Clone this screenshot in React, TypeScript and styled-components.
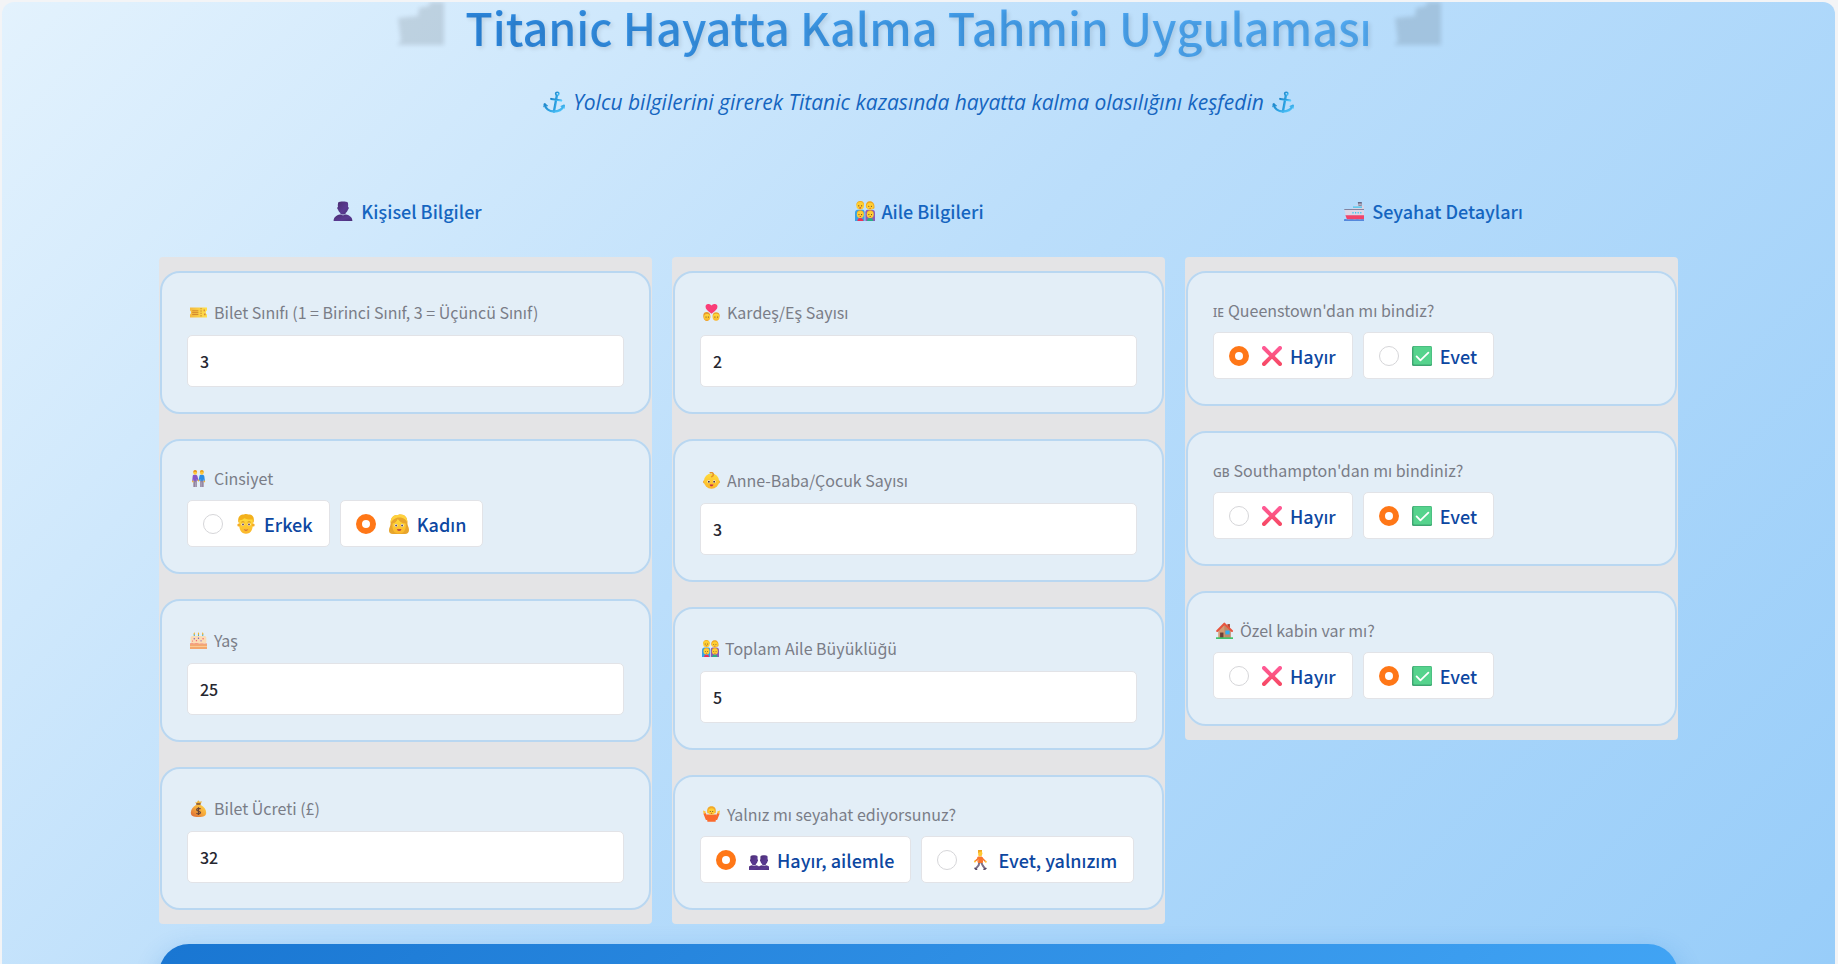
import React, { useState } from "react";
import styled, { createGlobalStyle } from "styled-components";

const sans = `"Noto Sans CJK SC", "Noto Sans", sans-serif`;

const GlobalStyle = createGlobalStyle`
  *, *::before, *::after { box-sizing: border-box; }
  body { margin: 0; background: #f3f4f6; font-family: ${sans}; }
`;

const Frame = styled.div`
  height: 100vh;
  padding: 2px 3px 0 2px;
  overflow: hidden;
`;

const Page = styled.main`
  height: 100%;
  overflow: hidden;
  padding: 0 16px;
  border-radius: 12px 12px 0 0;
  background: linear-gradient(135deg, #e3f2fd 0%, #bbdefb 45%, #98cdf9 100%);
`;

const Content = styled.div`
  max-width: 1519px;
  margin: 0 auto;
`;

const Header = styled.header`
  display: flex;
  flex-direction: column;
  align-items: center;
  gap: 20px;
  margin-bottom: 77px;
`;

const TitleRow = styled.div`
  display: flex;
  align-items: flex-start;
  justify-content: center;
  gap: 16px;
  width: 100%;
`;

const Title = styled.h1`
  margin: 0;
  padding-bottom: 14px;
  font-size: 45px;
  font-weight: 500;
  line-height: 50px;
  color: transparent;
  background: linear-gradient(45deg, #2984dc, #3f9bea 45%, #55adf5);
  background-clip: text;
  -webkit-background-clip: text;
  text-shadow: 2px 2px 4px rgba(0, 0, 0, 0.1);
`;

const ShipShadow = styled.svg`
  width: 58px;
  height: 50px;
  flex: none;
  filter: blur(2px);
`;

const Subtitle = styled.p`
  display: flex;
  align-items: center;
  gap: 8px;
  margin: 0;
  font-family: "Open Sans", "Noto Sans", sans-serif;
  font-size: 21px;
  font-style: italic;
  line-height: 32px;
  color: #1565c0;
`;

const Columns = styled.div`
  display: grid;
  grid-template-columns: repeat(3, minmax(0, 1fr));
  gap: 20px;
  align-items: start;
  margin-bottom: 20px;
`;

const ColumnTitle = styled.h2`
  display: flex;
  align-items: center;
  justify-content: center;
  gap: 4px;
  margin: 0 0 30px;
  font-size: 18px;
  font-weight: 500;
  line-height: 32px;
  color: #1565c0;
`;

const Panel = styled.div`
  display: flex;
  flex-direction: column;
  gap: 25px;
  padding: 14px 1px;
  border-radius: 4px;
  background: #e4e4e6;
`;

const Card = styled.div`
  padding: 25px;
  border: 2px solid #b9d7f1;
  border-radius: 20px;
  background: #e3eef7;
`;

const RadioCard = styled(Card).attrs({ as: "fieldset" })`
  min-width: 0;
  margin: 0;
`;

const FieldLabel = styled.label`
  display: flex;
  align-items: center;
  gap: 4px;
  margin-bottom: 9px;
  font-size: 16px;
  line-height: 28px;
  color: #7a7d87;
`;

const Legend = styled.legend<{ $baseline: boolean }>`
  display: flex;
  align-items: ${(p) => (p.$baseline ? "baseline" : "center")};
  gap: 4px;
  float: left;
  width: 100%;
  margin-bottom: 10px;
  padding: 0;
  font-size: 16px;
  line-height: 24px;
  color: #7a7d87;
`;

const CountryCode = styled.span`
  font-family: "Noto Sans", sans-serif;
  font-size: 12px;
  font-weight: 500;
  line-height: 16px;
`;

const NumberInput = styled.input`
  display: block;
  width: 100%;
  height: 52px;
  padding: 0 12px;
  border: 1px solid #e2e3e7;
  border-radius: 5px;
  background: #fff;
  font-family: ${sans};
  font-size: 16px;
  font-weight: 500;
  color: #262730;
`;

const Options = styled.div`
  display: flex;
  gap: 10px;
  clear: both;
`;

const Option = styled.label`
  display: flex;
  align-items: center;
  height: 47px;
  padding: 0 16px 0 15px;
  border: 1px solid #e2e3e7;
  border-radius: 5px;
  background: #fff;
  font-size: 18px;
  font-weight: 500;
  line-height: 24px;
  color: #0d47a1;
  white-space: nowrap;
`;

const OptionText = styled.span`
  margin-left: 4px;
`;

const Radio = styled.input`
  appearance: none;
  width: 20px;
  height: 20px;
  margin: 0 9px 0 0;
  border: 1px solid #d6d6d9;
  border-radius: 50%;
  background: #fff;

  &:checked {
    border: 6px solid #ff7717;
  }
`;

const Submit = styled.button`
  display: block;
  width: 100%;
  height: 64px;
  border: 0;
  border-radius: 30px;
  background: linear-gradient(135deg, #1976d2, #42a5f5);
  box-shadow: 0 8px 25px rgba(25, 118, 210, 0.3);
`;

const EmojiBox = styled.span<{ $w: number }>`
  display: inline-flex;
  justify-content: center;
  align-self: center;
  flex: none;
  width: ${(p) => p.$w}px;
`;

const HiddenDefs = styled.svg`
  position: absolute;
  width: 0;
  height: 0;
`;

const Gradients = () => (
  <HiddenDefs aria-hidden="true">
    <defs>
      <linearGradient id="anchorFill" x1="0" y1="0" x2="1" y2="1">
        <stop offset="0" stopColor="#1f86c9" />
        <stop offset="0.5" stopColor="#2b9fe0" />
        <stop offset="1" stopColor="#55cbff" />
      </linearGradient>
      <linearGradient id="purple" x1="0" y1="0" x2="1" y2="1">
        <stop offset="0" stopColor="#4b2e72" />
        <stop offset="0.6" stopColor="#5a3a92" />
        <stop offset="1" stopColor="#4a2f78" />
      </linearGradient>
      <linearGradient id="skin" x1="0" y1="0" x2="0" y2="1">
        <stop offset="0" stopColor="#ffdc3c" />
        <stop offset="1" stopColor="#fbb52a" />
      </linearGradient>
      <linearGradient id="ticket" x1="0" y1="0" x2="1" y2="0">
        <stop offset="0" stopColor="#f4b93f" />
        <stop offset="1" stopColor="#ffe04a" />
      </linearGradient>
      <linearGradient id="bag" x1="1" y1="0" x2="0" y2="1">
        <stop offset="0" stopColor="#ffd84a" />
        <stop offset="0.5" stopColor="#f5a53a" />
        <stop offset="1" stopColor="#d9653a" />
      </linearGradient>
      <linearGradient id="cross" x1="0" y1="0" x2="0" y2="1">
        <stop offset="0" stopColor="#ff5a94" />
        <stop offset="1" stopColor="#f74a66" />
      </linearGradient>
    </defs>
  </HiddenDefs>
);

const face = (x: number, y: number, r: number) => (
  <>
    <circle cx={x} cy={y} r={r} fill="#ffce32" />
    <circle cx={x - r * 0.38} cy={y} r={r * 0.16} fill="#5c3a2c" />
    <circle cx={x + r * 0.38} cy={y} r={r * 0.16} fill="#5c3a2c" />
    <ellipse cx={x} cy={y + r * 0.55} rx={r * 0.28} ry={r * 0.14} fill="#c2363a" />
  </>
);

const bust = (
  <>
    <path d="M5.2 1.4C6.4.1 13.6.1 14.8 1.4c.5 1.700.4 3.300.2 4.400.9.1 1.100 2.300 0 2.800-.5 1.800-1.600 2.900-2.400 3.400v1.600H7.400V12c-.8-.5-1.900-1.600-2.400-3.400-1.100-.5-.9-2.700 0-2.800-.2-1.100-.3-2.700.2-4.400z" />
    <path d="M.6 20c0-3.600 2.600-5.600 6.400-6.400 1.600 1 4.400 1 6 0 3.800.8 6.400 2.800 6.400 6.400z" />
  </>
);

const drawings: Record<string, React.ReactNode> = {
  anchor: (
    <g fill="none" stroke="url(#anchorFill)" strokeLinecap="round" strokeLinejoin="round">
      <circle cx="13" cy="2.6" r="1.5" strokeWidth="1.5" />
      <path d="M12.6 4.4L10 18.6" strokeWidth="2.2" />
      <path d="M7.4 7.2l9.2 1.5" strokeWidth="1.9" />
      <path d="M1.6 12.2C2.2 15.8 5.4 18.6 10 18.6c4 0 7.2-1.6 8.8-5" strokeWidth="2.2" />
      <path d="M.8 14.2l.8-2.3 2.3 1.5M16.6 14l2.5-1 .2 2.6" strokeWidth="1.2" />
    </g>
  ),
  person: <g fill="url(#purple)">{bust}</g>,
  people: (
    <g fill="url(#purple)">
      <g transform="translate(-2 5) scale(0.7 0.75)">{bust}</g>
      <g transform="translate(8 5) scale(0.7 0.75)">{bust}</g>
    </g>
  ),
  family: (
    <>
      <path d="M0 20V12c0-2 1.200-3.200 3-3.200h4.600c1.400 0 2 1 2 2.400V20z" fill="#39a3e6" />
      <path d="M10.400 20v-8.800c0-1.400.8-2.400 2.200-2.400H17c1.800 0 3 1.200 3 3.200v8z" fill="#8d5bb5" />
      <path d="M2.400 20c0-2 1.200-3 2.800-3S8.400 18 8.400 20z" fill="#ef2f57" />
      <path d="M12 20c0-2 1.200-3 3-3s3.200 1 3.200 3z" fill="#2cae86" />
      <path d="M11 6c-.6-4 1.400-5.800 4-5.800S20 2.400 19.400 7c-.2 1.400-8.200 1.400-8.400-1z" fill="#efa51e" />
      <path d="M1.400 4.600C1 1.600 2.800 0 5.200 0s4.200 1.400 3.800 4.600z" fill="#f0ac1f" />
      {face(5.2, 4.8, 3.8)}
      {face(15.1, 5.2, 3.5)}
      <path d="M1.900 12.600c-.2-2.200 1.400-3.400 3.400-3.400s3.600 1.200 3.300 3.400z" fill="#f0a01e" />
      <path d="M11.800 12.600c-.2-2.200 1.400-3.400 3.400-3.400s3.600 1.200 3.300 3.400z" fill="#f0a01e" />
      {face(5.3, 13.6, 3.5)}
      {face(15.2, 13.6, 3.5)}
    </>
  ),
  ship: (
    <>
      <path d="M13.800 1.200h4V5.600h-3.200z" fill="#46405c" />
      <path d="M14.200 2.600h3.600v1.200h-3.600z" fill="#d9d4e4" />
      <path d="M10.400 4.400H20v5H7.600l1.200-2.600z" fill="#d9d3e4" />
      <path d="M9 5.600h9v1.100H9z" fill="#37c7f2" />
      <path d="M.4 8.600H20V14.600H1.800z" fill="#dcd6e6" />
      <path d="M.2 8.200H20v.8H.4z" fill="#6d6785" />
      <path d="M8.400 11h1.200v1.400H8.400zM11 11h1.200v1.400H11zM13.600 11h1.200v1.400h-1.200zM16.200 11h1.200v1.400h-1.200z" fill="#37c7f2" />
      <path d="M1.400 14.200H20V18.600H3z" fill="#f1436a" />
      <path d="M0 18.400c2-.8 3 .2 5 0s3-.4 5 0 3-.4 5 0 3-.2 5 0V20H0z" fill="#5488dc" />
    </>
  ),
  ticket: (
    <>
      <path d="M0 4.200h20v3.400c-1.800.4-1.800 4.200 0 4.600V16H0v-3.800c1.600-.4 1.600-4.200 0-4.600z" fill="url(#ticket)" />
      <path d="M2.600 8h7.200M2.600 10.200h7.200M2.600 12.400h7.200" stroke="#cf8430" strokeWidth="1.1" />
      <path d="M13 4.600v11" stroke="#c88b31" strokeWidth="1.2" strokeDasharray="1.6 1.2" />
      <path d="M16 6.600h1.600v2H16zM16.400 11.200h2v2h-2z" fill="#d9883a" />
    </>
  ),
  couple: (
    <g transform="translate(1.8 0) scale(0.82 1)">
      <path d="M1.600 7.600c.2-1.600 1-2 3.400-2s3.200.6 3.600 2l1.400 4.800-1.400.6-1-2.400V13H3V10.600l-.6 2.600-1.400-.4z" fill="#8557c8" />
      <path d="M11.200 7.600c.4-1.600 1-2 3.600-2s3.400.6 3.600 2l.8 5.200-1.400.4-.8-2.600V13h-4.600v-2.400l-1 2.600-1.400-.8z" fill="#2e8de4" />
      <path d="M2.600 12.600h5V20H5.500v-5.600h-.4V20H2.600zM12.400 12.600h5V20h-2.300v-5.600h-.4V20h-2.300z" fill="#92839f" />
      <circle cx="5.200" cy="3" r="2.700" fill="#ffc83a" />
      <path d="M2.700 3C2.400 1 3.800.1 5.200.1S8 1 7.700 3C6 1.800 4.400 1.800 2.700 3z" fill="#e7901f" />
      <circle cx="14.800" cy="3" r="2.700" fill="#ffc83a" />
      <path d="M12.300 3c-.3-2 1.100-2.900 2.500-2.900S17.600 1 17.300 3c-1.500-1.200-3.300-1.200-5 0z" fill="#e7a01f" />
      <path d="M8.600 11.600h2.800l-1.400 2.400z" fill="#f9b52c" />
      <circle cx="1.700" cy="13.400" r="1" fill="#f9b52c" />
      <circle cx="18.500" cy="13.400" r="1" fill="#f9b52c" />
    </g>
  ),
  cake: (
    <>
      <path d="M5 2.400v4M10 2.400v4M15 2.400v4" stroke="#3fb1c4" strokeWidth="1.2" />
      <path d="M5 0l.9 2.400-.9 1-.9-1zM10 0l.9 2.400-.9 1-.9-1zM15 0l.9 2.400-.9 1-.9-1z" fill="#f7b227" />
      <rect x=".8" y="4.800" width="18.400" height="9" rx="2" fill="#fbdcb4" />
      <path d="M0 13.600c2-.6 3 .2 5 0s3-.4 5 0 3-.4 5 0 3-.6 5 0v1.400H0z" fill="#f6866a" />
      <path d="M0 14.600h20V20H0z" fill="#f3a76c" />
      <path d="M0 16.400h20v1.200H0z" fill="#fbcb96" />
      <g fill="#7a55c4">
        <circle cx="5" cy="8" r=".8" /><circle cx="10" cy="7.400" r=".8" /><circle cx="13" cy="10.400" r=".8" />
      </g>
      <g fill="#ee5a72">
        <circle cx="7.600" cy="10.200" r=".8" /><circle cx="15.400" cy="8" r=".8" /><circle cx="3" cy="10.600" r=".7" />
      </g>
    </>
  ),
  money: (
    <>
      <path d="M6 2.200l2 .6L9.600.4l1.800 1.800L14 1.400l-1.400 3.200H7.600z" fill="#f0b43c" />
      <path d="M7.400 3.800h5v2.200h-5z" fill="#7e4f3a" />
      <path d="M7.400 5.600h5C16.600 8 19 11 19 14.600c0 4-2.600 5.400-9 5.400s-9-1.400-9-5.400C1 11 3.400 8 7.400 5.600z" fill="url(#bag)" />
      <path d="M12.400 10.600c-1.200-1.400-4.600-1-4.600.9 0 2.200 4.600 1.200 4.600 3.300 0 1.900-3.600 2.100-4.800.6M10 8.600v9" fill="none" stroke="#6b4437" strokeWidth="1.4" />
    </>
  ),
  heartPair: (
    <>
      <path d="M10 11.400C5.400 8.200 3 6 3 3.200 3-.6 8-1 10 1.800 12-1 17-.6 17 3.200c0 2.800-2.400 5-7 8.200z" fill="#fa3d78" />
      <path d="M.4 15c-.6-4 1.600-5.600 4-5.600s4.600 1.600 4.200 5.600c-.2 6.600-8 6.400-8.200 0z" fill="#e9992b" />
      <circle cx="4.800" cy="15.600" r="3.700" fill="url(#skin)" />
      <path d="M11.400 15c-.6-4 1.600-5.400 4-5.400s4.800 1.400 4.200 5.400z" fill="#e9a32b" />
      <circle cx="15.400" cy="15.600" r="4" fill="url(#skin)" />
      <path d="M3 15.400h1.200M5.800 15.400H7M13.400 15.400h1.200M16.600 15.400h1.200" stroke="#75452e" strokeWidth="1.1" />
    </>
  ),
  baby: (
    <>
      <circle cx="1.800" cy="11.600" r="1.800" fill="#f2a130" />
      <circle cx="18.200" cy="11.600" r="1.800" fill="#f2a130" />
      <circle cx="10" cy="10.800" r="9" fill="url(#skin)" />
      <path d="M8.600.8c4-.8 4.800 3.400 1.600 4.800" fill="none" stroke="#e7932a" strokeWidth="1.800" strokeLinecap="round" />
      <circle cx="6.800" cy="11.400" r="1.600" fill="#fff" />
      <circle cx="13.200" cy="11.400" r="1.600" fill="#fff" />
      <circle cx="6.900" cy="11.500" r="1.100" fill="#4d2e2a" />
      <circle cx="13.100" cy="11.500" r="1.100" fill="#4d2e2a" />
      <path d="M7.800 14.800h4.400c-.2 2.800-4.200 2.800-4.400 0z" fill="#c32f4c" />
    </>
  ),
  shrug: (
    <>
      <path d="M4 10L10 10 16 10 14.800 18.600H5.200z" fill="#fb6a2c" />
      <path d="M1.800 8.400L4.400 15 7 12M18.200 8.400L15.600 15 13 12" fill="none" stroke="#fb6a2c" strokeWidth="3" strokeLinejoin="round" />
      <path d="M5.200 8.600c-1-5.600.8-8.200 4.800-8.200s5.800 2.600 4.800 8.200z" fill="#f2a92a" />
      {face(10, 6.4, 3.8)}
      <path d="M0 5.400l3.200 1-.4 2.600L.6 8.600zM20 5.400l-3.200 1 .4 2.600 2.200-.4z" fill="#ffc43a" />
    </>
  ),
  house: (
    <>
      <path d="M13.400 2.400h3v5h-3z" fill="#a84a36" />
      <path d="M3 9l6.600-6.600L17.400 9v10H3z" fill="#c18a68" />
      <path d="M3 9l6.600-6.600L10 12v7H3z" fill="#d49d75" />
      <path d="M4.800 12.400h4V19h-4z" fill="#6b4038" />
      <path d="M11 10h5v4.600h-5z" fill="#37aef0" />
      <path d="M1.400 10.600L9.800 2l9 8.600" fill="none" stroke="#e8553f" strokeWidth="2.400" strokeLinecap="round" strokeLinejoin="round" />
      <path d="M0 18h20v2H0z" fill="#41c36b" />
    </>
  ),
  man: (
    <>
      <path d="M2.400 8.600C1.400 3 3.800.4 8 .4c1.600-.6 3.400-.4 4.600.2 4.400 0 6 3 5 8z" fill="#f3b11c" />
      <path d="M3.400 6.200c3-.4 4-1.200 5-2 2.400 1.400 5.400 1.400 8.200 1.400.6 4.200.4 8-1.200 11.200-1.800 4-9 4-10.800 0-1.600-3.200-1.800-6.600-1.200-10.600z" fill="url(#skin)" />
      <circle cx="2.800" cy="11" r="1.500" fill="#f5ae27" /><circle cx="17.200" cy="11" r="1.500" fill="#f5ae27" />
      <ellipse cx="6.900" cy="10.400" rx="1.400" ry="1.200" fill="#fff" /><ellipse cx="13.100" cy="10.400" rx="1.400" ry="1.200" fill="#fff" />
      <circle cx="7" cy="10.400" r=".9" fill="#5a3a5c" /><circle cx="13" cy="10.400" r=".9" fill="#5a3a5c" />
      <path d="M5.400 8.200c1-.6 2-.6 3 0M11.600 8.200c1-.6 2-.6 3 0" fill="none" stroke="#c47a1a" strokeWidth=".8" />
      <path d="M7.800 15.200c1.400.7 3 .7 4.400 0-.3 1.800-4.100 1.800-4.400 0z" fill="#b8383e" />
    </>
  ),
  woman: (
    <>
      <path d="M1.600 9C1.600 3 5 .6 9 1c6-1.600 9.600 2 9.400 8 0 3 1.600 4 1.600 7 0 2.600-1.600 4-4 4H4c-2.800 0-4-1.600-4-3.600C0 13.600 1.800 12 1.600 9z" fill="#e8a52c" />
      <path d="M3.600 9.600C6 9 8 7.200 8.800 5c1.600 2.600 4.600 4.400 7.800 4.600.4 3.600-.2 6-1.600 7.800-2 2.800-7.800 2.800-10 0-1.400-1.800-1.800-4.600-1.400-7.800z" fill="url(#skin)" />
      <path d="M9 1c6-1.600 9.600 2 9.400 8-.8-3-4-6-9.600-5.400C5 4.600 3 7 1.600 9 1.600 3 5 .6 9 1z" fill="#ffd23e" />
      <circle cx="7" cy="11.400" r="1.400" fill="#fff" /><circle cx="13.200" cy="11.400" r="1.400" fill="#fff" />
      <circle cx="7.100" cy="11.400" r="1" fill="#5a4a6c" /><circle cx="13.100" cy="11.400" r="1" fill="#5a4a6c" />
      <path d="M8 15.200h4.400c-.3 2.200-4.100 2.200-4.400 0z" fill="#b32f3c" />
    </>
  ),
  walker: (
    <g fill="none" strokeLinecap="round" strokeLinejoin="round">
      <path d="M9.400 12l-.8 3.400-3 3.400M11 12l1.800 3.600 2.200 3" stroke="#7d7088" strokeWidth="2" />
      <path d="M5 18.200l1.600 1.400M14 19.400l2-1" stroke="#554a66" strokeWidth="1.4" />
      <path d="M8.600 8L5.400 11M12 8l3.200 3.200" stroke="#fb752c" strokeWidth="1.5" />
      <path d="M8.200 7h3.800l.6 5.400H8.400z" fill="#fb752c" stroke="#fb752c" strokeWidth="1" />
      <circle cx="15.800" cy="11.800" r="1" fill="#ffc43a" /><circle cx="4.900" cy="11.600" r="1" fill="#ffc43a" />
      <path d="M8.200.6h3.600l.6 2.800-.6 2.400-2 .6-1.600-1z" fill="#ffc932" />
      <path d="M8 .1h4v1.500L9.600 1.800 8.200 3.600z" fill="#f1a520" />
    </g>
  ),
  cross: (
    <path d="M2 2l16 16M18 2L2 18" stroke="url(#cross)" strokeWidth="4" strokeLinecap="round" />
  ),
  check: (
    <>
      <rect width="20" height="20" rx="1.500" fill="#3fa672" />
      <rect x="1.400" y=".4" width="18.200" height="18.200" rx="1" fill="#56d38d" />
      <path d="M4.600 10.400l3.800 4 8-7.800" fill="none" stroke="#fff" strokeWidth="1.800" strokeLinecap="round" strokeLinejoin="round" />
    </>
  ),
};

const Emoji = ({ name, size = 20, box = 28 }: { name: string; size?: number; box?: number }) => (
  <EmojiBox $w={box} aria-hidden="true">
    <svg width={size} height={size} viewBox="0 0 20 20">{drawings[name]}</svg>
  </EmojiBox>
);

const Silhouette = () => (
  <ShipShadow viewBox="0 0 58 50" aria-hidden="true">
    <path d="M7 16l20-2 1-8 10-2 2-7h13v46H6l4-4z" fill="rgba(0,0,0,0.11)" />
  </ShipShadow>
);

const LabelEmoji = ({ name }: { name: string }) => (
  <Emoji name={name} size={17} box={name === "family" ? 21 : 23} />
);

function NumberField({ id, icon, label, initial }: { id: string; icon: string; label: string; initial: string }) {
  const [value, setValue] = useState(initial);
  return (
    <Card>
      <FieldLabel htmlFor={id}>
        <LabelEmoji name={icon} />
        {label}
      </FieldLabel>
      <NumberInput id={id} inputMode="numeric" value={value} onChange={(e) => setValue(e.target.value)} />
    </Card>
  );
}

type Choice = { icon: string; text: string };

function RadioField({ id, icon, code, label, choices, initial }: {
  id: string; icon?: string; code?: string; label: string; choices: Choice[]; initial: number;
}) {
  const [selected, setSelected] = useState(initial);
  return (
    <RadioCard>
      <Legend $baseline={!!code}>
        {icon && <LabelEmoji name={icon} />}
        {code && <CountryCode>{code}</CountryCode>}
        {label}
      </Legend>
      <Options>
        {choices.map((c, i) => (
          <Option key={c.text}>
            <Radio type="radio" name={id} checked={selected === i} onChange={() => setSelected(i)} />
            <Emoji name={c.icon} />
            <OptionText>{c.text}</OptionText>
          </Option>
        ))}
      </Options>
    </RadioCard>
  );
}

const yesNo: Choice[] = [
  { icon: "cross", text: "Hayır" },
  { icon: "check", text: "Evet" },
];

export default function App() {
  return (
    <Frame>
      <GlobalStyle />
      <Gradients />
      <Page>
        <Content>
          <Header>
            <TitleRow>
              <Silhouette />
              <Title>Titanic Hayatta Kalma Tahmin Uygulaması</Title>
              <Silhouette />
            </TitleRow>
            <Subtitle>
              <Emoji name="anchor" size={22} box={22} />
              Yolcu bilgilerini girerek Titanic kazasında hayatta kalma olasılığını keşfedin
              <Emoji name="anchor" size={22} box={22} />
            </Subtitle>
          </Header>

          <Columns>
            <section>
              <ColumnTitle><Emoji name="person" />Kişisel Bilgiler</ColumnTitle>
              <Panel>
                <NumberField id="sinif" icon="ticket" label="Bilet Sınıfı (1 = Birinci Sınıf, 3 = Üçüncü Sınıf)" initial="3" />
                <RadioField
                  id="cinsiyet"
                  icon="couple"
                  label="Cinsiyet"
                  choices={[{ icon: "man", text: "Erkek" }, { icon: "woman", text: "Kadın" }]}
                  initial={1}
                />
                <NumberField id="yas" icon="cake" label="Yaş" initial="25" />
                <NumberField id="ucret" icon="money" label="Bilet Ücreti (£)" initial="32" />
              </Panel>
            </section>

            <section>
              <ColumnTitle><Emoji name="family" box={24} />Aile Bilgileri</ColumnTitle>
              <Panel>
                <NumberField id="kardes" icon="heartPair" label="Kardeş/Eş Sayısı" initial="2" />
                <NumberField id="ebeveyn" icon="baby" label="Anne-Baba/Çocuk Sayısı" initial="3" />
                <NumberField id="aile" icon="family" label="Toplam Aile Büyüklüğü" initial="5" />
                <RadioField
                  id="yalniz"
                  icon="shrug"
                  label="Yalnız mı seyahat ediyorsunuz?"
                  choices={[{ icon: "people", text: "Hayır, ailemle" }, { icon: "walker", text: "Evet, yalnızım" }]}
                  initial={0}
                />
              </Panel>
            </section>

            <section>
              <ColumnTitle><Emoji name="ship" />Seyahat Detayları</ColumnTitle>
              <Panel>
                <RadioField id="queenstown" code="IE" label="Queenstown'dan mı bindiz?" choices={yesNo} initial={0} />
                <RadioField id="southampton" code="GB" label="Southampton'dan mı bindiniz?" choices={yesNo} initial={1} />
                <RadioField id="kabin" icon="house" label="Özel kabin var mı?" choices={yesNo} initial={1} />
              </Panel>
            </section>
          </Columns>

          <Submit type="submit" />
        </Content>
      </Page>
    </Frame>
  );
}
